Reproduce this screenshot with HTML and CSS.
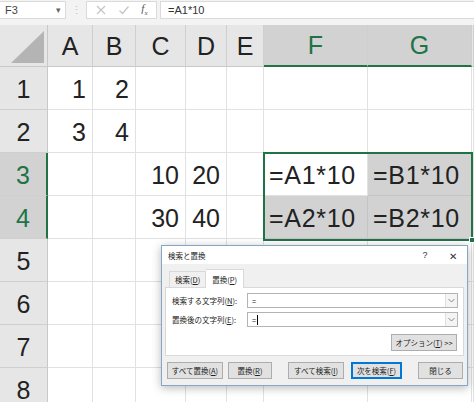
FILE: index.html
```html
<!DOCTYPE html>
<html lang="ja">
<head>
<meta charset="utf-8">
<link rel="stylesheet" href="styles.css">
</head>
<body>
<div class="app">
  <div class="fbar">
    <div class="namebox"><span>F3</span><span class="nb-arrow">▾</span></div>
    <div class="fsep">⋮</div>
    <div class="fbtns">
      <svg class="ficon" width="12" height="12" viewBox="0 0 12 12"><path d="M2 2 L10 10 M10 2 L2 10" stroke="#c4c4c4" stroke-width="1.2" fill="none"/></svg>
      <svg class="ficon" width="12" height="12" viewBox="0 0 12 12"><path d="M1.5 6.5 L4.5 9.5 L10.5 2.5" stroke="#c4c4c4" stroke-width="1.2" fill="none"/></svg>
      <span class="fx">f<sub>x</sub></span>
    </div>
    <div class="finput">=A1*10</div>
  </div>

  <div class="sheet">
    <div class="corner"><div class="tri"></div></div>
    <div class="ch">A</div><div class="ch">B</div><div class="ch">C</div><div class="ch">D</div><div class="ch">E</div><div class="ch sel">F</div><div class="ch sel">G</div><div class="ch"></div>

    <div class="rh">1</div><div class="c num">1</div><div class="c num">2</div><div class="c"></div><div class="c"></div><div class="c"></div><div class="c"></div><div class="c"></div><div class="c"></div>
    <div class="rh">2</div><div class="c num">3</div><div class="c num">4</div><div class="c"></div><div class="c"></div><div class="c"></div><div class="c"></div><div class="c"></div><div class="c"></div>
    <div class="rh sel">3</div><div class="c"></div><div class="c"></div><div class="c num">10</div><div class="c num">20</div><div class="c"></div><div class="c txt">=A1*10</div><div class="c txt shade">=B1*10</div><div class="c"></div>
    <div class="rh sel">4</div><div class="c"></div><div class="c"></div><div class="c num">30</div><div class="c num">40</div><div class="c"></div><div class="c txt shade">=A2*10</div><div class="c txt shade">=B2*10</div><div class="c"></div>
    <div class="rh">5</div><div class="c"></div><div class="c"></div><div class="c"></div><div class="c"></div><div class="c"></div><div class="c"></div><div class="c"></div><div class="c"></div>
    <div class="rh">6</div><div class="c"></div><div class="c"></div><div class="c"></div><div class="c"></div><div class="c"></div><div class="c"></div><div class="c"></div><div class="c"></div>
    <div class="rh">7</div><div class="c"></div><div class="c"></div><div class="c"></div><div class="c"></div><div class="c"></div><div class="c"></div><div class="c"></div><div class="c"></div>
    <div class="rh">8</div><div class="c"></div><div class="c"></div><div class="c"></div><div class="c"></div><div class="c"></div><div class="c"></div><div class="c"></div><div class="c"></div>

    <div class="range"></div>
    <div class="handle"></div>
  </div>

  <div class="dialog">
    <div class="dtitle">
      <span class="dt-text">検索と置換</span>
      <span class="dt-help">?</span>
      <span class="dt-close">✕</span>
    </div>
    <div class="dbody">
      <div class="tabs">
        <div class="tab">検索(<u>D</u>)</div>
        <div class="tab active">置換(<u>P</u>)</div>
      </div>
      <div class="panel">
        <div class="frow">
          <span class="flabel">検索する文字列(<u>N</u>):</span>
          <div class="combo"><span class="cval">=</span><span class="carrow"><svg width="7" height="5" viewBox="0 0 7 5"><path d="M0.5 1 L3.5 4 L6.5 1" stroke="#888" fill="none"/></svg></span></div>
        </div>
        <div class="frow">
          <span class="flabel">置換後の文字列(<u>E</u>):</span>
          <div class="combo"><span class="cval">=<span class="caret"></span></span><span class="carrow"><svg width="7" height="5" viewBox="0 0 7 5"><path d="M0.5 1 L3.5 4 L6.5 1" stroke="#888" fill="none"/></svg></span></div>
        </div>
        <div class="orow"><div class="btn opt">オプション(<u>T</u>) &gt;&gt;</div></div>
      </div>
      <div class="brow">
        <div class="btn b1">すべて置換(<u>A</u>)</div>
        <div class="btn b2">置換(<u>R</u>)</div>
        <div class="btn b3">すべて検索(<u>I</u>)</div>
        <div class="btn b4 default">次を検索(<u>F</u>)</div>
        <div class="btn b5">閉じる</div>
      </div>
    </div>
  </div>
</div>
</body>
</html>
```

FILE: styles.css
```css
* { box-sizing: border-box; }
html, body { margin: 0; padding: 0; }
body {
  width: 474px;
  height: 402px;
  overflow: hidden;
  background: #fff;
  font-family: "Liberation Sans", "Noto Sans CJK JP", sans-serif;
}
.app { position: relative; width: 474px; height: 402px; overflow: hidden; }

/* formula bar */
.fbar {
  height: 25px;
  background: #f3f3f3;
  display: flex;
  align-items: flex-start;
  padding-top: 1px;
  font-size: 11px;
  color: #444;
}
.namebox {
  width: 66px;
  height: 18px;
  background: #fff;
  border: 1px solid #dadada;
  border-left: none;
  display: flex;
  align-items: center;
  justify-content: space-between;
  padding: 0 4px 0 5px;
}
.nb-arrow { font-size: 9px; color: #666; }
.fsep { width: 20px; text-align: center; color: #c0c0c0; font-size: 11px; line-height: 18px; }
.fbtns {
  width: 71px;
  height: 18px;
  background: #fff;
  border: 1px solid #dadada;
  display: flex;
  align-items: center;
  justify-content: space-around;
  padding: 0 3px;
}
.fx { font-family: "Liberation Serif", serif; font-style: italic; font-size: 11px; color: #555; }
.fx sub { font-size: 7px; }
.finput {
  flex: 1;
  height: 18px;
  margin-left: 3px;
  background: #fff;
  border: 1px solid #dadada;
  border-right: none;
  padding-left: 7px;
  line-height: 16px;
  font-size: 11px;
  color: #333;
}

/* sheet grid */
.sheet {
  position: relative;
  display: grid;
  grid-template-columns: 48px 45px 43px 50px 41px 37px 104px 104px 2px;
  grid-template-rows: 42px repeat(8, 43px);
  font-size: 25px;
  color: #222;
}
.sheet > .corner, .sheet > .ch, .sheet > .rh, .sheet > .c { min-width: 0; }
.corner {
  background: #e6e6e6;
  border-right: 1px solid #c8c8c8;
  border-bottom: 1px solid #c8c8c8;
  position: relative;
}
.tri {
  position: absolute;
  right: 3px;
  bottom: 3px;
  width: 33px;
  height: 32px;
  background: #b4b4b4;
  clip-path: polygon(100% 0, 100% 100%, 0 100%);
}
.ch {
  background: #e6e6e6;
  border-right: 1px solid #cfcfcf;
  border-bottom: 1px solid #c8c8c8;
  display: flex;
  align-items: center;
  justify-content: center;
  padding-top: 1px;
}
.ch.sel {
  background: #d2d2d2;
  color: #217346;
  border-bottom: 2px solid #217346;
}
.rh {
  background: #e6e6e6;
  border-right: 1px solid #c8c8c8;
  border-bottom: 1px solid #cfcfcf;
  display: flex;
  align-items: center;
  justify-content: center;
  padding-top: 2px;
}
.rh.sel {
  background: #d2d2d2;
  color: #217346;
  border-right: 2px solid #217346;
}
.c {
  border-right: 1px solid #e1e1e1;
  border-bottom: 1px solid #e1e1e1;
  display: flex;
  align-items: center;
  padding-top: 2px;
  white-space: nowrap;
  overflow: visible;
}
.c.num { justify-content: flex-end; padding-right: 6px; }
.c.txt { padding-left: 5px; letter-spacing: 0.7px; }
.c.shade { background: #d2d2d2; border-color: #c4c4c4; }

.range {
  position: absolute;
  left: 263px;
  top: 127px;
  width: 210px;
  height: 89px;
  border: 2px solid #217346;
  pointer-events: none;
}
.handle {
  position: absolute;
  left: 469px;
  top: 212px;
  width: 6px;
  height: 6px;
  background: #217346;
  border: 1px solid #fff;
}

/* dialog */
.dialog {
  position: absolute;
  left: 161px;
  top: 245px;
  width: 307px;
  height: 141px;
  border: 1px solid #87a5c6;
  background: #f0f0f0;
  box-shadow: 0 2px 9px rgba(0,0,0,0.28);
  font-family: "Noto Sans CJK JP", "Liberation Sans", sans-serif;
  font-size: 7.5px;
  color: #222;
  display: flex;
  flex-direction: column;
}
.dialog u { text-underline-offset: 1px; }
.dtitle {
  height: 18px;
  background: #fff;
  display: flex;
  align-items: center;
  padding: 0 0 0 6px;
  flex-shrink: 0;
}
.dt-text { flex: 1; }
.dt-help { width: 28px; text-align: center; font-family: "Liberation Sans", sans-serif; font-size: 9px; color: #333; }
.dt-close { width: 28px; text-align: center; font-size: 10px; color: #333; }
.dbody { flex: 1; display: flex; flex-direction: column; padding: 3px 3px 0 3px; }
.tabs { display: flex; align-items: flex-end; padding-left: 4px; height: 20px; }
.tab {
  height: 16px;
  padding: 0 5px;
  display: flex;
  align-items: center;
  border: 1px solid #d9d9d9;
  border-bottom: none;
  background: #f0f0f0;
}
.tab.active {
  height: 19px;
  background: #fff;
  position: relative;
  top: 1px;
  padding: 0 6px;
  border-left: none;
}
.panel {
  background: #fff;
  border: 1px solid #d9d9d9;
  height: 69px;
  padding: 5px 5px 0 6px;
  display: flex;
  flex-direction: column;
  gap: 4px;
}
.frow { display: flex; align-items: center; height: 15px; }
.flabel { width: 75px; flex-shrink: 0; }
.combo {
  flex: 1;
  height: 15px;
  border: 1px solid #b4b4b4;
  background: #fff;
  display: flex;
  align-items: center;
}
.cval { flex: 1; padding-left: 4px; display: flex; align-items: center; }
.caret { display: inline-block; width: 1px; height: 10px; background: #000; margin-left: 1px; }
.carrow {
  width: 12px;
  height: 13px;
  border-left: 1px solid #e0e0e0;
  background: #f4f4f4;
  display: flex;
  align-items: center;
  justify-content: center;
}
.orow { display: flex; justify-content: flex-end; margin-top: 3px; }
.btn {
  height: 17px;
  border: 1px solid #adadad;
  background: #e1e1e1;
  display: flex;
  align-items: center;
  justify-content: center;
  white-space: nowrap;
}
.btn.opt { width: 66px; margin-right: 1px; }
.brow { display: flex; align-items: center; margin-top: 6px; padding-left: 2px; }
.b1 { width: 56px; }
.b2 { width: 44px; margin-left: 5px; }
.b3 { width: 56px; margin-left: 16px; }
.b4 { width: 51px; margin-left: 7px; }
.b5 { width: 45px; margin-left: 16px; }
.btn.default { border: 1px solid #0078d7; box-shadow: inset 0 0 0 1px #0078d7; }
```
